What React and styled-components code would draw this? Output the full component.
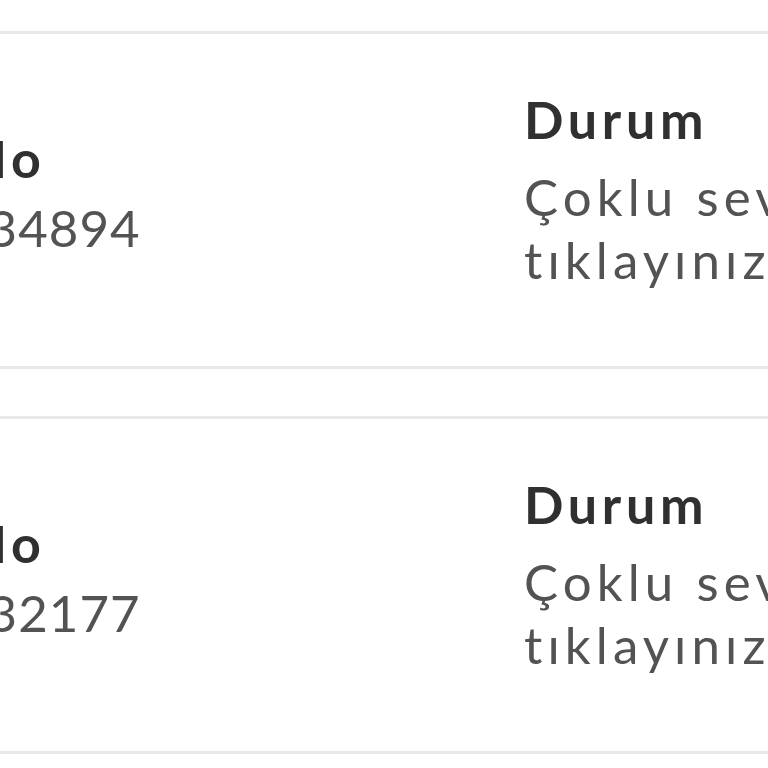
import React from "react";
import styled, { createGlobalStyle } from "styled-components";

const GlobalStyle = createGlobalStyle`
    html, body {
        margin: 0;
        padding: 0;
        background: #ffffff;
        overflow: hidden;
    }
    body {
        font-family: "Lato", "Open Sans", sans-serif;
    }
`;

const Page = styled.div`
    padding-top: 31px;
    margin-left: -196px;
    width: 1600px;
`;
const List = styled.div`
    display: flex;
    flex-direction: column;
    gap: 47px;
`;
const Card = styled.div`
    box-sizing: border-box;
    height: 338px;
    display: grid;
    grid-template-columns: 720px 760px;
    align-items: center;
    padding-bottom: 14px;
    border-top: 3px solid #e8e8e8;
    border-bottom: 3px solid #e8e8e8;
    background: #ffffff;
`;
const Field = styled.div`
    display: flex;
    flex-direction: column;
    max-width: ${(p) => p.width || 600}px;
    margin-bottom: ${(p) => p.lift || 0}px;
`;
const Label = styled.div`
    font-size: 52px;
    font-weight: 700;
    line-height: 62px;
    letter-spacing: 0.09em;
    color: #303030;
    margin-bottom: ${(p) => p.gap}px;
    white-space: nowrap;
`;
const Value = styled.div`
    font-size: 51px;
    font-weight: 400;
    line-height: 63px;
    letter-spacing: ${(p) => p.spacing || "0.1em"};
    color: #535353;
`;

const orders = [
    { no: "72610834894", status: "Çoklu sevkiyat için tıklayınız" },
    { no: "72610832177", status: "Çoklu sevkiyat için tıklayınız" },
];

const App = () => {
    return (
        <>
            <GlobalStyle />
            <Page>
                <List>
                    {orders.map((order) => (
                        <Card key={order.no}>
                            <Field>
                                <Label gap={7}>Takip No</Label>
                                <Value spacing="0.02em">{order.no}</Value>
                            </Field>
                            <Field width={700} lift={8}>
                                <Label gap={15}>Durum</Label>
                                <Value>{order.status}</Value>
                            </Field>
                        </Card>
                    ))}
                </List>
            </Page>
        </>
    );
};

export default App;
